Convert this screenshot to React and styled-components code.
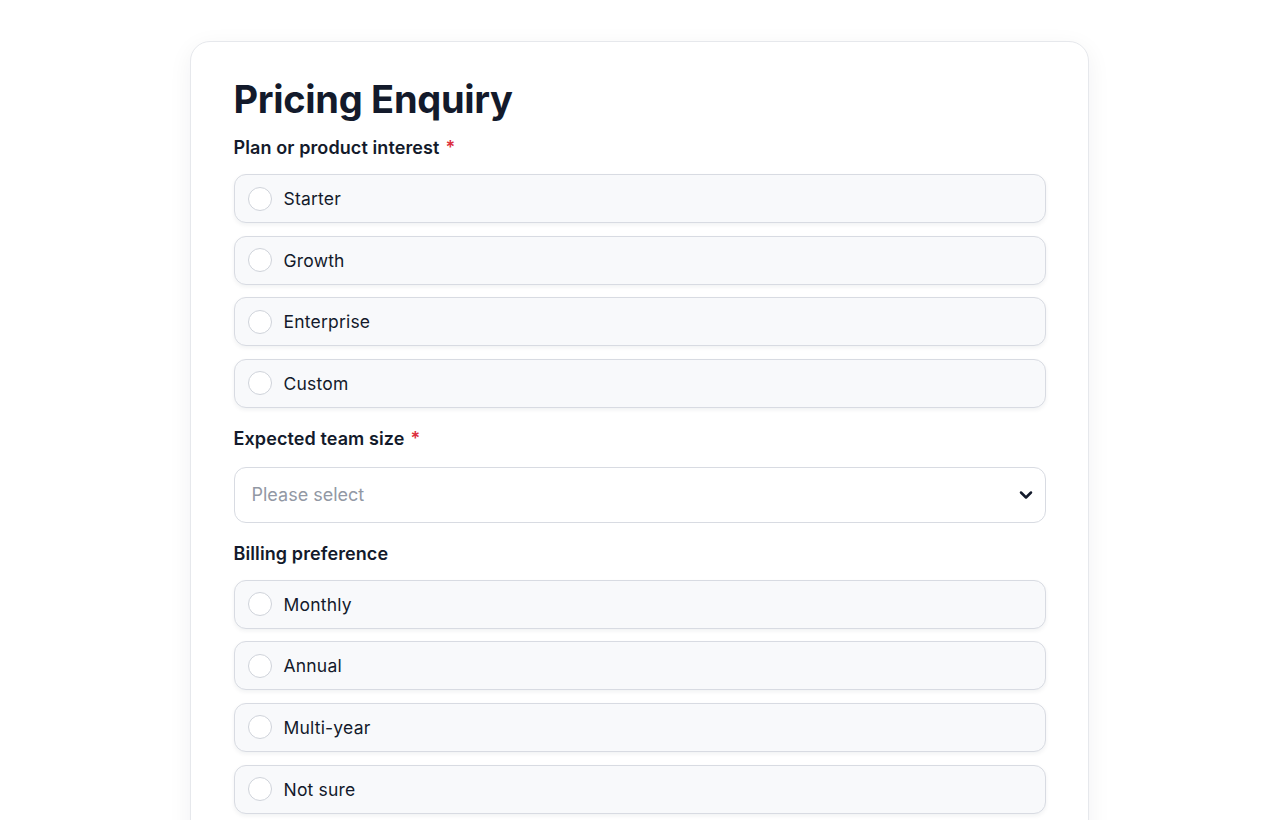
import styled, { createGlobalStyle } from 'styled-components';

const GlobalStyle = createGlobalStyle`
  html, body {
    margin: 0;
    padding: 0;
    background: #ffffff;
    font-family: 'Inter', 'Noto Sans', sans-serif;
    color: #131a2b;
  }
  * { box-sizing: border-box; }
`;

const planOptions = ['Starter', 'Growth', 'Enterprise', 'Custom'];
const billingOptions = ['Monthly', 'Annual', 'Multi-year', 'Not sure'];

const RadioGroup = ({ name, options }) => (
  <StyledOptions>
    {options.map((opt) => (
      <StyledOption key={opt}>
        <input type="radio" name={name} value={opt} />
        <StyledCircle />
        <span>{opt}</span>
      </StyledOption>
    ))}
  </StyledOptions>
);

const Label = ({ children, required }) => (
  <StyledLabel>
    {children}
    {required && <StyledRequired>*</StyledRequired>}
  </StyledLabel>
);

const App = () => {
  return (
    <>
      <GlobalStyle />
      <StyledPage>
        <StyledCard>
          <StyledTitle>Pricing Enquiry</StyledTitle>
          <StyledField>
            <Label required>Plan or product interest</Label>
            <RadioGroup name="plan" options={planOptions} />
          </StyledField>
          <StyledField>
            <Label required>Expected team size</Label>
            <StyledSelectWrap>
              <StyledSelect defaultValue="">
                <option value="" disabled>
                  Please select
                </option>
                <option>1–10</option>
                <option>11–50</option>
                <option>51–200</option>
                <option>200+</option>
              </StyledSelect>
              <StyledChevron viewBox="0 0 24 24" aria-hidden="true">
                <path d="M6 9l6 6 6-6" />
              </StyledChevron>
            </StyledSelectWrap>
          </StyledField>
          <StyledField>
            <Label>Billing preference</Label>
            <RadioGroup name="billing" options={billingOptions} />
          </StyledField>
        </StyledCard>
      </StyledPage>
    </>
  );
};

export default App;

const StyledPage = styled.div`
  display: flex;
  justify-content: center;
  padding: 41px 2px 40px 0;
`;

const StyledCard = styled.div`
  width: 899px;
  background: #ffffff;
  border: 1px solid #e6e8ec;
  border-radius: 20px;
  box-shadow: 0 6px 24px rgba(20, 28, 45, 0.06);
  padding: 33px 42px 40px 43px;
  display: flex;
  flex-direction: column;
`;

const StyledTitle = styled.h1`
  margin: 0 0 14px;
  font-size: 38px;
  line-height: 48px;
  font-weight: 700;
  letter-spacing: -0.3px;
  color: #131a2b;
`;

const StyledField = styled.div`
  display: flex;
  flex-direction: column;
  margin-bottom: 20px;
`;

const StyledLabel = styled.label`
  font-size: 18px;
  line-height: 22px;
  font-weight: 600;
  letter-spacing: 0.1px;
  color: #131a2b;
  margin-bottom: 15px;
`;

const StyledRequired = styled.span`
  color: #dc2f3e;
  margin-left: 6px;
`;

const StyledOptions = styled.div`
  display: flex;
  flex-direction: column;
  gap: 12.6px;
`;

const StyledOption = styled.label`
  display: flex;
  align-items: center;
  gap: 12px;
  height: 49px;
  padding: 0 13px;
  background: #f8f9fb;
  border: 1px solid #d8dbe2;
  border-radius: 12px;
  box-shadow: 0 2px 4px rgba(20, 28, 45, 0.06);
  font-size: 17.5px;
  letter-spacing: 0.2px;
  color: #131a2b;
  cursor: pointer;

  input {
    display: none;
  }
`;

const StyledCircle = styled.span`
  width: 24px;
  height: 24px;
  border-radius: 50%;
  border: 1px solid #cfd3da;
  background: #ffffff;
  flex-shrink: 0;
`;

const StyledSelectWrap = styled.div`
  position: relative;
  margin-top: 2px;
`;

const StyledSelect = styled.select`
  appearance: none;
  width: 100%;
  height: 56px;
  padding: 0 48px 0 17px;
  border: 1px solid #d8dbe2;
  border-radius: 12px;
  background: #ffffff;
  font-family: inherit;
  font-size: 18px;
  color: #9298a4;
  outline: none;
`;

const StyledChevron = styled.svg`
  position: absolute;
  right: 10px;
  top: 50%;
  width: 20px;
  height: 20px;
  transform: translateY(-50%);
  fill: none;
  stroke: #131a2b;
  stroke-width: 3;
  stroke-linecap: round;
  stroke-linejoin: round;
  pointer-events: none;
`;
